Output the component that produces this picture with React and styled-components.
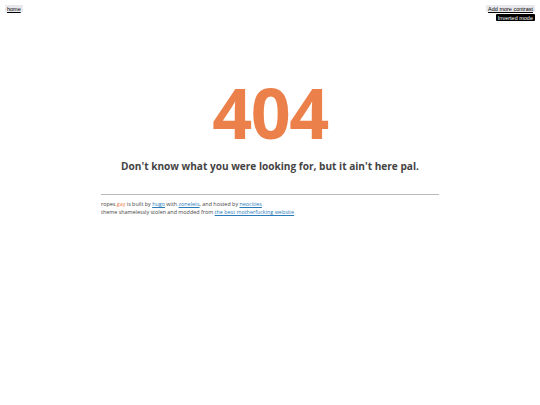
import React from "react";
import styled, { createGlobalStyle } from "styled-components";

const Global = createGlobalStyle`
  html, body { margin: 0; padding: 0; background: #ffffff; }
  body { font-family: "Open Sans", sans-serif; color: #444444; }
`;

const TopBar = styled.div`
  display: flex;
  justify-content: space-between;
  align-items: flex-start;
  padding: 5px 5px 0 5px;
  height: 16px;
`;

const Controls = styled.div`
  display: flex;
  flex-direction: column;
  align-items: flex-end;
  gap: 2px;
`;

const Btn = styled.button`
  font-family: "Liberation Sans", Arial, sans-serif;
  font-size: 5.5px;
  line-height: 6px;
  padding: 0.5px 2px;
  border: none;
  border-radius: 1px;
  background: ${(p) => (p.$dark ? "#000000" : "#e9e9ed")};
  color: ${(p) => (p.$dark ? "#ffffff" : "#000000")};
  text-decoration: underline;
  margin: 0;
`;

const Main = styled.main`
  width: 338px;
  margin: 0 auto;
  padding-top: 56px;
`;

const Code = styled.h1`
  margin: 0;
  text-align: center;
  font-family: "Open Sans", sans-serif;
  font-weight: 700;
  font-size: 70px;
  line-height: 70px;
  letter-spacing: -1.5px;
  color: #ec804a;
`;

const Message = styled.h2`
  margin: 12px 0 0 0;
  text-align: center;
  font-family: "Open Sans", sans-serif;
  font-weight: 700;
  font-size: 10.1px;
  line-height: 15px;
  color: #444444;
`;

const Rule = styled.hr`
  border: none;
  border-top: 1px solid #bbbbbb;
  margin: 20px 0 5px 0;
`;

const Foot = styled.footer`
  font-family: "Open Sans", sans-serif;
  font-size: 5.4px;
  line-height: 8px;
  color: #444444;
`;

const Link = styled.a`
  color: #2a7ab8;
  text-decoration: underline;
`;

const Accent = styled.span`
  color: #ec804a;
`;

export default function App() {
  return (
    <>
      <Global />
      <TopBar>
        <Btn>home</Btn>
        <Controls>
          <Btn>Add more contrast</Btn>
          <Btn $dark>Inverted mode</Btn>
        </Controls>
      </TopBar>
      <Main>
        <Code>404</Code>
        <Message>Don't know what you were looking for, but it ain't here pal.</Message>
        <Rule />
        <Foot>
          <div>
            ropes<Accent>.gay</Accent> is built by <Link href="#">hugo</Link> with{" "}
            <Link href="#">zonelets</Link>, and hosted by <Link href="#">neocities</Link>
          </div>
          <div>
            theme shamelessly stolen and modded from{" "}
            <Link href="#">the best motherfucking website</Link>
          </div>
        </Foot>
      </Main>
    </>
  );
}
